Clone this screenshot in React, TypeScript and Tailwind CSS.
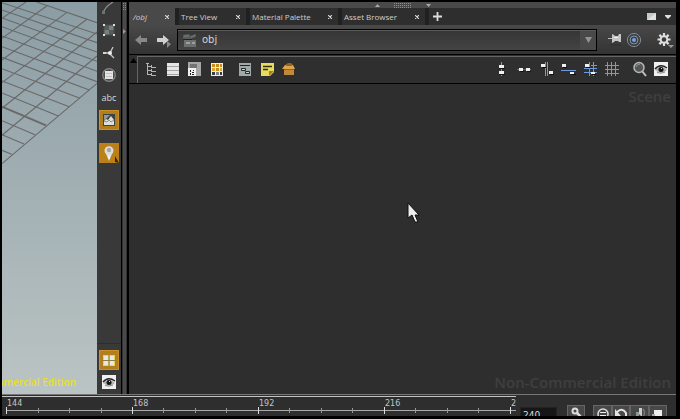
import type { ReactNode } from "react";

const TABS = ["/obj", "Tree View", "Material Palette", "Asset Browser"];
const TAB_WIDTHS = ["w-[46px]", "w-[71px]", "w-[92px]", "w-[87px]"];
const FRAMES = ["144", "168", "192", "216"];

function Icon({ label, size = 16, children }: { label?: string; size?: number; children: ReactNode }) {
  return (
    <svg width={size} height={size} viewBox={`0 0 ${size} ${size}`} role="img" aria-label={label} className="block shrink-0">
      {children}
    </svg>
  );
}

function IconButton({ label, className = "", children }: { label: string; className?: string; children: ReactNode }) {
  return (
    <button type="button" aria-label={label} className={`flex shrink-0 items-center justify-center ${className}`}>
      {children}
    </button>
  );
}

function EyeIcon() {
  return (
    <Icon>
      <path d="M1 1h14v14H1z" fill="#f0f0f0" />
      <path d="M2 9Q8 2 14 9Q8 14 2 9Z" fill="#b4b4b4" />
      <path d="M2 8Q7 2 14 7" fill="none" stroke="#222" strokeWidth="1.4" />
      <circle cx="8" cy="8.5" r="2.5" fill="#151515" />
      <path d="M8 7h1v1H8z" fill="#ddd" />
      <path d="M4 11.500Q8 13 12 11" fill="none" stroke="#888" />
    </Icon>
  );
}

function ViewportGrid() {
  // [x1, y1, x2, y2] at three times the drawn scale
  const lines = [
    [0, 485, 285, 244], [0, 400, 285, 162], [0, 319, 285, 90], [0, 242, 256, 51], [0, 174, 194, 32],
    [0, 109, 134, 12], [0, 49, 72, 0], [0, 445, 29, 457], [0, 398, 66, 426], [0, 356, 99, 398],
    [0, 273, 169, 342], [0, 237, 202, 314], [0, 200, 234, 289], [0, 166, 262, 264], [0, 134, 285, 239],
    [0, 102, 285, 208], [0, 74, 285, 178], [0, 48, 285, 150], [0, 24, 285, 122], [0, 2, 285, 96],
    [104, 0, 285, 62],
  ];
  return (
    <svg viewBox="0 0 285 500" className="w-full" aria-hidden="true">
      {lines.map(([x1, y1, x2, y2]) => (
        <line key={`${x1}-${y1}`} x1={x1} y1={y1} x2={x2} y2={y2} stroke="#696868" strokeWidth="3.4" />
      ))}
      <line x1="0" y1="314" x2="132" y2="370" stroke="#6a6a6a" strokeWidth="6" />
    </svg>
  );
}

function Viewport() {
  return (
    <section className="flex w-[95px] shrink-0 flex-col justify-between overflow-hidden bg-linear-to-b from-[#8b9da4] to-[#bbc4c4]">
      <ViewportGrid />
      <p className="flex justify-end overflow-hidden pr-[21px] pb-1.5 font-['Open_Sans',sans-serif] text-[10px] leading-3 font-semibold whitespace-nowrap text-[#e6e02c]">
        mmercial Edition
      </p>
    </section>
  );
}

function DisplayStrip() {
  return (
    <aside className="flex w-6 shrink-0 flex-col items-center bg-[#393939]">
      <IconButton label="Curve" className="h-3 w-6">
        <svg width="16" height="12" viewBox="0 0 16 12">
          <path d="M2 11Q4 5 12 0" fill="none" stroke="#888e8c" strokeWidth="1.3" />
          <path d="M1 9h3v3H1z" fill="#647670" />
        </svg>
      </IconButton>
      <IconButton label="Bounding box" className="mt-1 h-6 w-6">
        <Icon>
          <path d="M3 3h10v10H3z" fill="#555b57" />
          <path d="M8 3h5v5H8zM3 8h5v5H3z" fill="#7b7f7b" />
          <path d="M3 3h10v10H3z" fill="none" stroke="#3f5049" />
          <path d="M2 2h2v2H2zM12 2h2v2h-2zM2 12h2v2H2zM12 12h2v2h-2z" fill="#dedede" />
        </Icon>
      </IconButton>
      <IconButton label="Normals" className="h-[22px] w-6">
        <Icon>
          <path d="M2 8h7M9 8l3-6M9 9l4 4" stroke="#c8c8c8" strokeWidth="1.3" />
          <path d="M2 7h3v2H2z" fill="#e0d9a8" />
          <circle cx="9" cy="8" r="2" fill="#f0f0f0" />
        </Icon>
      </IconButton>
      <IconButton label="Material" className="h-[22px] w-6">
        <Icon>
          <circle cx="8" cy="8" r="6.3" fill="#4b4b4b" stroke="#858585" strokeWidth="1.2" />
          <path d="M4 4h8v8H4z" fill="#e4e4e4" />
          <path d="M5 6.500h6M5 9.500h6" stroke="#c0c0c0" />
        </Icon>
      </IconButton>
      <button type="button" className="flex h-6 items-center pb-px font-['Open_Sans',sans-serif] text-[9px] leading-3 text-[#d8d8d8]">
        abc
      </button>
      <IconButton label="Background image" className="h-5 w-5 border border-[#cb902a] bg-[#b27f1e]">
        <Icon>
          <path d="M2 2h12v12H2z" fill="#3c4345" />
          <path d="M3 3h6L5 7 3 8z" fill="#929792" />
          <path d="M3 9l2-2 2 1 3-4 3 4v5H3z" fill="#dedfda" />
          <path d="M3 9l3 1 2-2 2 2 3-2" fill="none" stroke="#8b8f8a" />
        </Icon>
      </IconButton>
      <IconButton label="Pin tool" className="mt-[13px] h-5 w-5 bg-[#bb8118]">
        <svg width="20" height="20" viewBox="0 0 20 20">
          <path d="M10 18L7 11a4.500 4.500 0 1 1 6 0z" fill="#ddd" />
          <circle cx="10" cy="7" r="2.200" fill="#a5a5a5" />
          <path d="M10 12v4" stroke="#fff" />
          <path d="M16 13v6l4 1z" fill="#33270f" />
        </svg>
      </IconButton>
      <div className="mt-auto h-px w-full bg-[#2d2d2d]" />
      <IconButton label="Quad view" className="mt-1.5 h-5 w-5 border border-[#cb902a] bg-[#b27f1e]">
        <Icon>
          <path d="M2 3h12v11H2z" fill="#e5d64a" />
          <path d="M3 4h4v4H3zM9 4h4v4H9zM3 9h4v4H3zM9 9h4v4H9z" fill="#e8e8df" />
          <path d="M8 3v11M2 8.500h12" stroke="#8a7d55" />
        </Icon>
      </IconButton>
      <IconButton label="Display options" className="mt-0.5 mb-0.5 h-5 w-5"><EyeIcon /></IconButton>
    </aside>
  );
}

function Tab({ name, width, active }: { name: string; width: string; active: boolean }) {
  return (
    <div className={`flex ${width} shrink-0 items-center justify-between pr-1 ${active ? "bg-[#494949] pl-1" : "border-l-4 border-[#202020] bg-[#2e2e2e] pl-0.5"}`}>
      <button type="button" role="tab" aria-selected={active} className={`leading-4 whitespace-nowrap ${active ? "italic" : ""}`}>
        {name}
      </button>
      <button type="button" aria-label={`Close ${name}`} className="flex h-4 w-2 items-center justify-center">
        <svg width="4" height="4" viewBox="0 0 4 4"><path d="M0 0l4 4M4 0L0 4" stroke="#ddd" strokeWidth="1.1" /></svg>
      </button>
    </div>
  );
}

function TabBar() {
  return (
    <div role="tablist" className="flex h-[17px] shrink-0 bg-[#2e2e2e] font-['Open_Sans',sans-serif] text-[8px] text-[#cfcfcf]">
      {TABS.map((name, i) => (
        <Tab key={name} name={name} width={TAB_WIDTHS[i]} active={i === 0} />
      ))}
      <IconButton label="New tab" className="w-5 border-l-4 border-[#202020]">
        <svg width="9" height="9" viewBox="0 0 9 9"><path d="M4.500 0v9M0 4.500h9" stroke="#ddd" strokeWidth="1.8" /></svg>
      </IconButton>
      <IconButton label="Maximize pane" className="mr-1.5 ml-auto">
        <svg width="9" height="7" viewBox="0 0 9 7"><path d="M0 0h9v7H0z" fill="#c0cbc8" /><path d="M0 7L9 0v7z" fill="#dfe3dc" /></svg>
      </IconButton>
      <IconButton label="Pane menu" className="mr-0.5 w-3">
        <svg width="6" height="4" viewBox="0 0 6 4"><path d="M0 0h6v1L3 4 0 1z" fill="#e0e0e0" /></svg>
      </IconButton>
    </div>
  );
}

function PathBar() {
  return (
    <div className="flex h-[30px] shrink-0 items-center border-b border-black bg-linear-to-b from-[#494949] to-[#333] pl-1">
      <IconButton label="Back" className="h-6 w-4">
        <svg width="14" height="12" viewBox="0 0 14 12"><path d="M1 6l6-5v3h6v4H7v3z" fill="#888" /></svg>
      </IconButton>
      <IconButton label="Forward" className="ml-1 h-6 w-5">
        <svg width="16" height="16" viewBox="0 0 16 16">
          <path d="M14 8L8 3v3H2v4h6v3z" fill="#d0d0d0" />
          <path d="M12 9v7l4-4z" fill="#888" />
        </svg>
      </IconButton>
      <div className="ml-1 flex h-[22px] flex-1 items-center border border-black bg-linear-to-b from-[#353535] to-[#444] pl-1 shadow-[inset_0_1px_0_#5b5b5b]">
        <Icon label="Object network">
          <path d="M1 3l6-1 2 2 5-2v3L9 7H1z" fill="#545b5a" />
          <path d="M2 4h5M9 5l4-2" stroke="#7b817f" />
          <path d="M2 8h12v7H2z" fill="#6b706e" />
          <path d="M4 10h4v2H4zM10 10h3v2h-3z" fill="#9a9f9c" />
          <path d="M1 7.500h9" stroke="#222" />
        </Icon>
        <input aria-label="Network path" defaultValue="obj" className="min-w-0 flex-1 bg-transparent px-1 text-[10px] leading-4 text-[#d2d2d2] outline-none" />
        <IconButton label="Path history" className="mt-px h-[19px] w-4 bg-[#494949]">
          <svg width="7" height="6" viewBox="0 0 7 6"><path d="M0 0h7L3.500 6z" fill="#929292" /></svg>
        </IconButton>
      </div>
      <IconButton label="Pin pane" className="ml-2.5 h-6 w-4">
        <Icon>
          <path d="M1 6.500h5" stroke="#bcbcbc" />
          <path d="M5 2l2 1 1 1h3l1-2h2v8h-2l-1-1H8l-1 1-2 1z" fill="#c5c5c5" />
          <path d="M7 5.500h4" stroke="#eee" />
          <path d="M3 13h11" stroke="#343434" strokeWidth="2" />
        </Icon>
      </IconButton>
      <IconButton label="Link radial" className="ml-px h-6 w-5">
        <Icon>
          <circle cx="8" cy="8" r="6.6" fill="none" stroke="#7c8d9a" />
          <circle cx="8" cy="8" r="4" fill="none" stroke="#8094ab" />
          <circle cx="8" cy="8" r="2" fill="#6fa3e6" />
        </Icon>
      </IconButton>
      <IconButton label="Network settings" className="ml-2.5 h-6 w-[22px]">
        <svg width="20" height="18" viewBox="0 0 20 18">
          <path d="M9 2v13M2.500 8.500h13M4.400 3.900l9.200 9.200M4.400 13.100l9.200-9.200" stroke="#ddd" strokeWidth="2.2" />
          <circle cx="9" cy="8.500" r="3.300" fill="#3a3a3a" stroke="#ddd" strokeWidth="2" />
          <path d="M13 14h6l-3 3z" fill="#999" />
        </svg>
      </IconButton>
    </div>
  );
}

const LEFT_TOOLS: [string, ReactNode][] = [
  ["Tree list", <path d="M4.500 2v12M4 5.500h4M4 9.500h4M4 13.500h4M8.500 4v3M8 6.500h5M8.500 8v3M8 10.500h5M8.500 12v3M8 14.500h5M3 2.500h3" fill="none" stroke="#b4b4b4" />],
  ["List view", <g><path d="M2 2h12v13H2z" fill="#e6e6e6" /><path d="M2 5.500h12M2 9.500h12M2 13.500h12" stroke="#a5a5a5" /></g>],
  ["Parameters", <g><path d="M1 1h13v14H1z" fill="#a6a6a6" /><path d="M3 3h7v4H3z" fill="#737373" /><path d="M1 7h8v8H1z" fill="#f2f2f2" /><path d="M3 9h1v2H3zM6 9h1v1H6zM3 12h1v2H3zM5 11h2v1H5zM5 13h2v1H5z" fill="#222" /></g>],
  ["Palette", <g><path d="M2 2h12v13H2z" fill="#f0eee4" /><path d="M3 3h3v3H3zM7 3h3v3H7zM11 3h2v3h-2zM7 7h3v3H7z" fill="#c88c1d" /><path d="M3 7h3v3H3zM11 7h2v3h-2z" fill="#e0a72b" /><path d="M3 11h3v3H3z" fill="#383f48" /><path d="M7 11h3v3H7z" fill="#7a828b" /><path d="M11 11h2v3h-2z" fill="#2f394a" /></g>],
  ["Network box", <g><path d="M2 2h12v13H2z" fill="#a0a8a8" /><path d="M3 4.500h10" stroke="#1d2425" /><path d="M4.500 7.500h4v2h-4zM8.500 10.500h4v2h-4z" fill="#ccd2d2" stroke="#20282a" /></g>],
  ["Sticky note", <g><path d="M2 2h13v9l-4 4H2z" fill="#e8dc60" /><path d="M10 15v-5h5z" fill="#b27b18" /><path d="M4 5.500h9M4 8.500h5" stroke="#333018" strokeWidth="1.500" /></g>],
  ["Subnet", <g><path d="M3 7h10v7H3z" fill="#c18938" /><path d="M1 8l3-4h8l2 4z" fill="#dda54e" /><path d="M4 4l3-2h3l2 2-2 1H6z" fill="#956221" /><path d="M3 8.500h10" stroke="#966326" /></g>],
];

const RIGHT_TOOLS: [string, ReactNode][] = [
  ["Align vertical", <g><path d="M7.500 1v14" stroke="#6b9be0" /><path d="M5 4h5v3H5zM5 10h5v3H5z" fill="#f0f0f0" /><path d="M5 7.500h6M5 13.500h6" stroke="#151515" /></g>],
  ["Align horizontal", <g><path d="M1 8.500h14" stroke="#536f8f" /><path d="M3 7h4v3H3zM10 7h4v3h-4z" fill="#f0f0f0" /><path d="M4 10.500h4M11 10.500h4" stroke="#151515" /></g>],
  ["Snap vertical", <g><path d="M7.500 1v14M9.500 1v14" stroke="#6b9be0" /><path d="M3 3h4v3H3zM11 10h4v3h-4z" fill="#f0f0f0" /><path d="M4 6.500h4M12 13.500h4" stroke="#111" /></g>],
  ["Snap horizontal", <g><path d="M1 9.500h15" stroke="#6b9be0" /><path d="M2 3h4v3H2zM10 11h4v2h-4z" fill="#f0f0f0" /><path d="M3 6.500h4M11 13.500h5" stroke="#111" /></g>],
  ["Snap to grid", <g><path d="M7.500 1v14M11.500 1v14M2 7.500h13M2 11.500h13M9 4.500h6" stroke="#6b9be0" /><path d="M3 3h4v3H3zM9 11h4v2H9z" fill="#f0f0f0" /><path d="M4 6.500h4M10 13.500h4" stroke="#111" /></g>],
  ["Show grid", <path d="M3.500 1v14M7.500 1v14M11.500 1v14M1 4.500h14M1 8.500h14M1 12.500h14" stroke="#6b9be0" />],
];

function NetworkToolbar() {
  return (
    <div className="flex h-[29px] shrink-0 border-b border-black bg-[#2f2f2f]">
      <IconButton label="Collapse toolbar" className="mt-px w-[9px] items-start! border-r border-[#666] pt-0.5">
        <svg width="7" height="5" viewBox="0 0 7 5"><path d="M3.500 0L7 5H0z" fill="#000" /></svg>
      </IconButton>
      <div className="mt-px flex flex-1 items-center border-t border-[#666] pr-[5px] pb-0.5 pl-0.5">
        {LEFT_TOOLS.map(([label, art], i) => (
          <IconButton key={label} label={label} className={`h-5 w-[22px] ${i === 4 ? "ml-1.5" : ""}`}>
            <Icon>{art}</Icon>
          </IconButton>
        ))}
        <div className="flex-1" />
        {RIGHT_TOOLS.map(([label, art]) => (
          <IconButton key={label} label={label} className="h-5 w-[22px]">
            <Icon>{art}</Icon>
          </IconButton>
        ))}
        <IconButton label="Find node" className="ml-1.5 h-5 w-[22px]">
          <Icon>
            <path d="M10 10l4 5" stroke="#c4c4c4" strokeWidth="2" />
            <circle cx="7" cy="6.500" r="5" fill="#525756" stroke="#b5b8b7" strokeWidth="1.500" />
            <path d="M4 6q1-3 4-3" fill="none" stroke="#979c9a" />
          </Icon>
        </IconButton>
        <IconButton label="Visibility" className="h-5 w-5"><EyeIcon /></IconButton>
      </div>
    </div>
  );
}

function NetworkPane() {
  return (
    <main className="flex min-w-0 flex-1 flex-col bg-[#2e2e2e]">
      <div className="flex h-1.5 shrink-0 items-center justify-center gap-3.5 bg-[#494949]">
        <svg width="5" height="3" viewBox="0 0 5 3"><path d="M2.500 0L5 3H0z" fill="#aaa" /></svg>
        <svg width="18" height="5" viewBox="0 0 18 5"><path d="M0 .5h18M0 2.500h18M0 4.500h18" stroke="#8e8e8e" strokeDasharray="1 1" /></svg>
        <svg width="5" height="3" viewBox="0 0 5 3"><path d="M0 0h5L2.500 3z" fill="#aaa" /></svg>
      </div>
      <TabBar />
      <PathBar />
      <NetworkToolbar />
      <div className="relative flex flex-1 flex-col justify-between px-[5px] pt-0.5 pb-0.5 text-right font-['Open_Sans',sans-serif] text-[15px] leading-5 font-semibold text-[#3f3f3f]">
        <p>Scene</p>
        <p>Non-Commercial Edition</p>
        <svg width="12" height="20" viewBox="0 0 12 20" className="absolute top-[119px] left-[278px]">
          <path d="M1 0v15l4-3 3 7h3l-3-7h4z" fill="#eee" stroke="#111" strokeWidth="1" />
        </svg>
      </div>
    </main>
  );
}

function Timeline() {
  return (
    <footer className="flex h-[22px] shrink-0 overflow-hidden border-t border-[#777] bg-[#2e2e2e]">
      <div className="mt-px flex min-w-0 flex-1 border-t border-[#c4c4c4] pl-1">
        {[...FRAMES, "2"].map((frame, i) => (
          <div key={frame} className={i < 4 ? "flex-[126]" : "flex-[6]"}>
            <p className="h-[10px] pl-px text-[8px] leading-[14px] text-[#c4c4c4]">{frame}</p>
            <div className="flex h-[7px]">
              {(i < 4 ? [0, 1, 2, 3] : [0]).map((tick) => (
                <div key={tick} className="flex flex-1 items-center">
                  <i className={`w-px ${tick === 0 ? "h-[7px] bg-[#ddd]" : "h-[5px] bg-[#999]"}`} />
                  <i className="h-px flex-1 bg-[#aaa]" />
                </div>
              ))}
            </div>
          </div>
        ))}
      </div>
      <input aria-label="End frame" defaultValue="240" className="mt-3 ml-1 h-4 w-[37px] shrink-0 border border-[#222] bg-[#161616] px-0.5 text-[9px] leading-4 text-[#ddd] outline-none" />
      <div className="mt-2.5 mr-[9px] ml-2.5 flex items-start">
        <IconButton label="Set key" className="mr-2 h-[18px] w-[18px] border border-[#666] bg-[#484848]">
          <Icon><circle cx="7" cy="5" r="2.500" fill="none" stroke="#ddd" strokeWidth="2" /><path d="M9 7l6 6" stroke="#ddd" strokeWidth="2.500" /></Icon>
        </IconButton>
        <IconButton label="Realtime" className="h-[18px] w-[19px] border border-[#666] bg-[#484848]">
          <Icon><circle cx="8" cy="8" r="5" fill="#444" stroke="#ddd" strokeWidth="1.500" /><path d="M5 6.500h6M5 9.500h6" stroke="#eee" /></Icon>
        </IconButton>
        <IconButton label="Loop" className="h-[18px] w-[18px] border border-[#666] bg-[#484848]">
          <Icon><path d="M4 6q5-5 9 1v5" fill="none" stroke="#e4e4e4" strokeWidth="2" /><path d="M2 3v7h6z" fill="#e4e4e4" /></Icon>
        </IconButton>
        <IconButton label="Audio" className="h-[18px] w-[19px] border border-[#666] bg-[#484848]">
          <Icon><path d="M7 2h3v9L7 8z" fill="#ccc" /><path d="M4 6h3v5H4z" fill="#8e9997" /><path d="M11 3q3 4 0 8" fill="none" stroke="#777" strokeWidth="1.500" /></Icon>
        </IconButton>
        <IconButton label="Playback options" className="h-[18px] w-[18px] border border-[#666] bg-[#484848]">
          <Icon><path d="M4 4h8v10H4z" fill="#eee" /><path d="M2 8h3v3H2z" fill="#aaa" /></Icon>
        </IconButton>
      </div>
    </footer>
  );
}

export default function App() {
  return (
    <div className="flex h-screen flex-col overflow-hidden bg-black pt-0.5 pr-1 pb-[3px] pl-0.5 font-['DejaVu_Sans',sans-serif]">
      <div className="flex min-h-0 flex-1">
        <Viewport />
        <DisplayStrip />
        <div className="mr-0.5 ml-px flex w-[5px] shrink-0 flex-col items-center border-x border-[#333] bg-[#4a4a4a]">
          <svg width="3" height="40" viewBox="0 0 3 40">
            <path d="M.5 1v8M2.500 1v8" stroke="#888" strokeDasharray="1 1" />
            <path d="M0 27l3 2.500L0 32z" fill="#999" />
          </svg>
        </div>
        <NetworkPane />
      </div>
      <Timeline />
    </div>
  );
}
